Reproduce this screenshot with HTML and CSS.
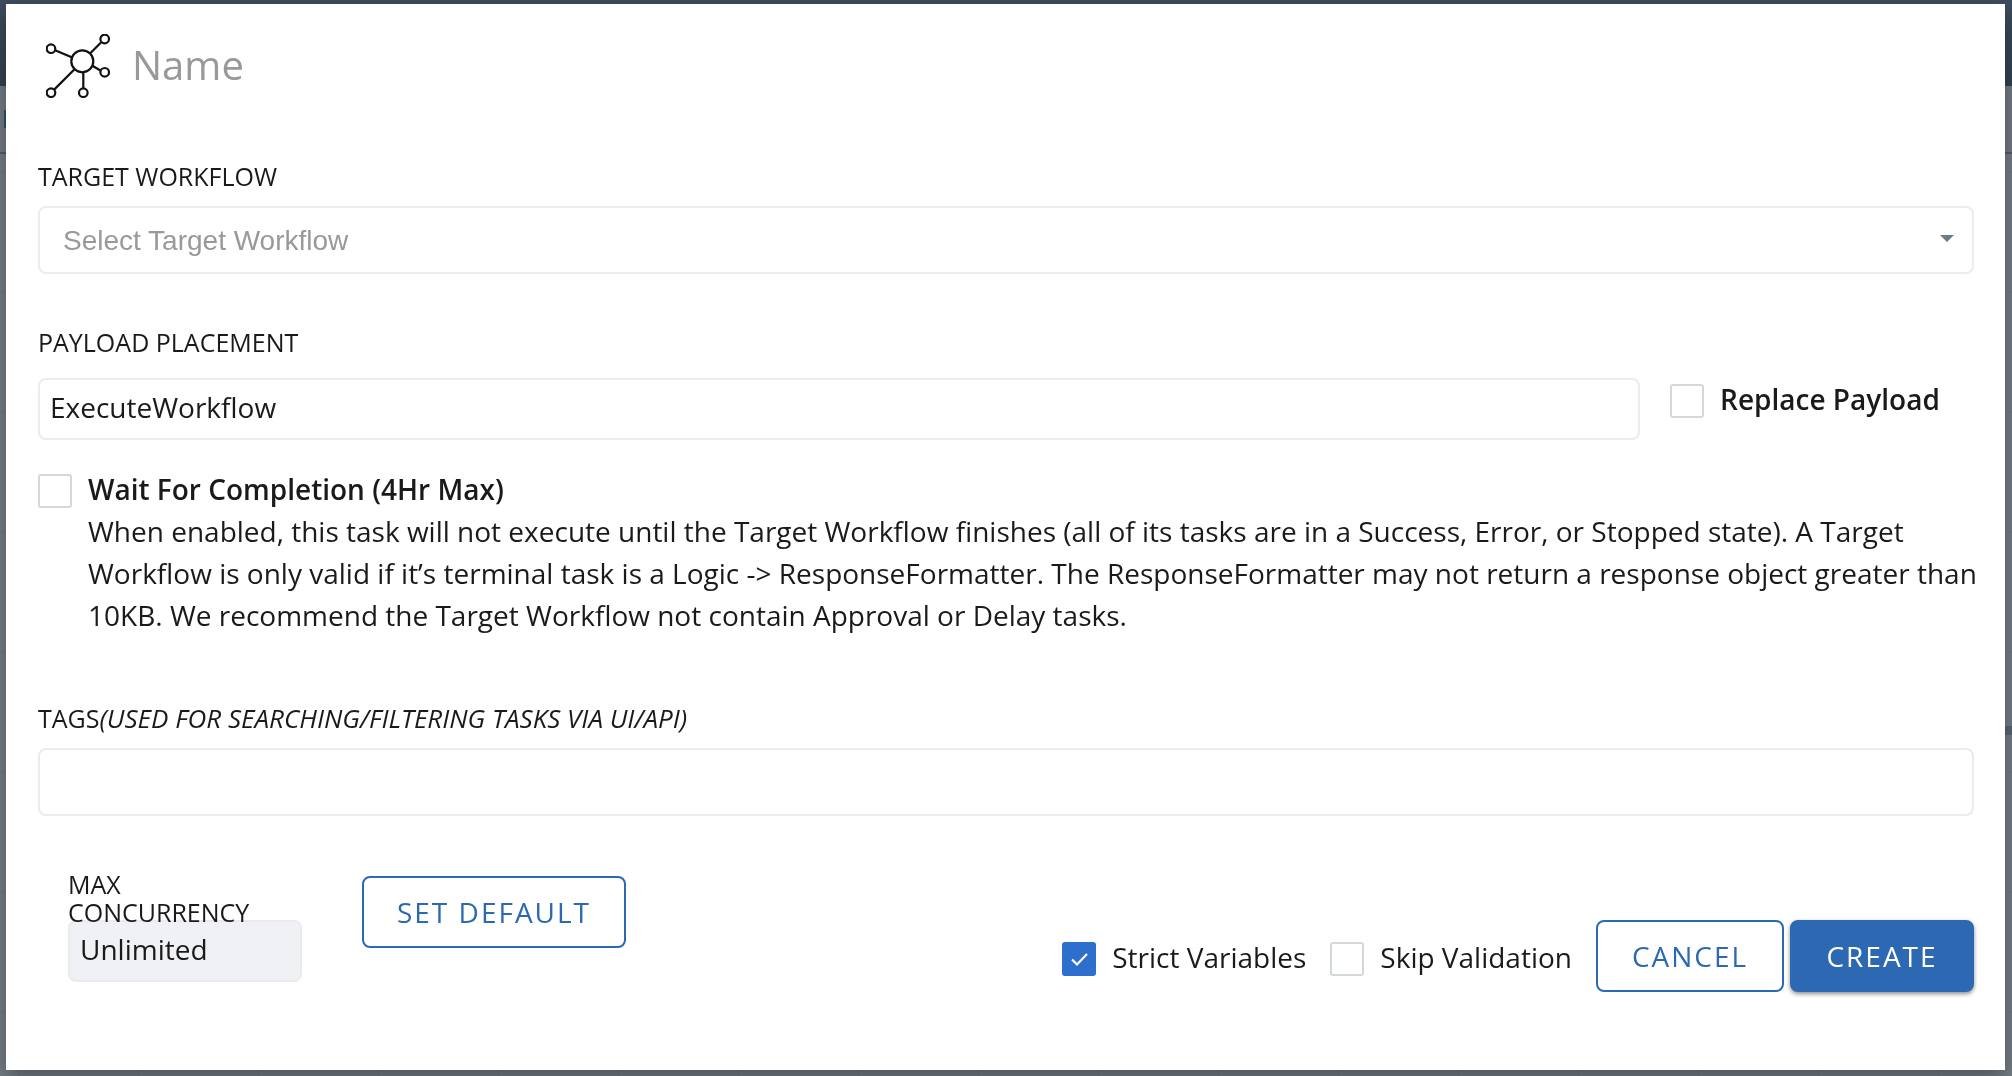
FILE: index.html
```
<!DOCTYPE html>
<html lang="en">
<head>
  <meta charset="utf-8">
  <title>Execute Workflow</title>
  <link rel="stylesheet" href="styles.css">
</head>
<body>
  <div class="backdrop" aria-hidden="true">
    <div class="topbar"></div>
    <div class="toolbar"><span class="toolbar-tab"></span></div>
    <div class="canvas"><span class="canvas-edge"></span></div>
  </div>
  <form class="dialog" role="dialog" aria-label="Execute Workflow">
    <header class="dialog-header">
      <svg class="task-icon" viewBox="0 0 64 64" fill="none" stroke="#111" stroke-width="2.200">
        <path d="M44 19.500 55.500 8M25.700 23.300 9.600 16.500M46.800 32 54.400 36.500M37.300 38.500V54M28.500 35.200 8.400 55.400"/>
        <circle cx="36.300" cy="27.300" r="11"/>
        <circle cx="58.700" cy="5" r="4.300"/>
        <circle cx="5" cy="14.700" r="4.300"/>
        <circle cx="58.700" cy="38.300" r="4.300"/>
        <circle cx="37.300" cy="58.700" r="4.300"/>
        <circle cx="5" cy="58.700" r="4.300"/>
      </svg>
      <input class="name-input" type="text" placeholder="Name" aria-label="Name">
    </header>

    <div class="field">
      <label class="field-label" for="targetWorkflow">TARGET WORKFLOW</label>
      <div class="select-wrap">
        <select id="targetWorkflow">
          <option value="" selected>Select Target Workflow</option>
        </select>
      </div>
    </div>

    <div class="field payload">
      <label class="field-label" for="payloadPlacement">PAYLOAD PLACEMENT</label>
      <div class="payload-row">
        <input class="text-input" type="text" id="payloadPlacement" value="ExecuteWorkflow">
        <label class="check strong"><input type="checkbox"><span>Replace Payload</span></label>
      </div>
    </div>

    <div class="wait">
      <input type="checkbox" id="waitForCompletion">
      <div class="wait-text">
        <label for="waitForCompletion">Wait For Completion (4Hr Max)</label>
        <p>When enabled, this task will not execute until the Target Workflow finishes (all of its tasks are in a Success, Error, or Stopped state). A Target Workflow is only valid if it’s terminal task is a Logic -&gt; ResponseFormatter. The ResponseFormatter may not return a response object greater than 10KB. We recommend the Target Workflow not contain Approval or Delay tasks.</p>
      </div>
    </div>

    <div class="field tags">
      <label class="field-label" for="tags">TAGS<em>(USED FOR SEARCHING/FILTERING TASKS VIA UI/API)</em></label>
      <input class="text-input tall" type="text" id="tags">
    </div>

    <footer class="dialog-footer">
      <div class="concurrency">
        <label for="maxConcurrency">MAX CONCURRENCY</label>
        <input class="text-input" type="text" id="maxConcurrency" value="Unlimited" disabled>
      </div>
      <button type="button" class="btn btn-default">SET DEFAULT</button>
      <div class="actions">
        <label class="check"><input type="checkbox" checked><span>Strict Variables</span></label>
        <label class="check"><input type="checkbox"><span>Skip Validation</span></label>
        <div class="buttons">
          <button type="button" class="btn">CANCEL</button>
          <button type="submit" class="btn btn-primary">CREATE</button>
        </div>
      </div>
    </footer>
  </form>
</body>
</html>
```
FILE: styles.css
```
* {
  box-sizing: border-box;
}
body {
  margin: 0;
  min-height: 100vh;
  display: flex;
  padding: 4px 7px 6px 6px;
  font-family: "Open Sans", "Noto Sans", sans-serif;
  font-size: 28px;
  color: #1a1a1a;
}
input, select, button {
  font: inherit;
  color: inherit;
}

/* dimmed editor behind the dialog */
.backdrop {
  position: fixed;
  inset: 0;
  display: flex;
  flex-direction: column;
}
.topbar {
  height: 86px;
  background: linear-gradient(#3e4c5e, #33424f);
}
.toolbar {
  height: 68px;
  padding: 24px 4px;
  background: #737b84;
  border-bottom: 2px solid #555d66;
}
.toolbar-tab {
  display: block;
  width: 90px;
  height: 18px;
  background: #2f5078;
}
.canvas {
  flex: 1;
  padding-top: 572px;
  background-color: #757e86;
  background-image:
    linear-gradient(#6f7880 1px, transparent 1px),
    linear-gradient(90deg, #6f7880 1px, transparent 1px);
  background-size: 120px 120px;
  background-position: 18px 18px;
}
.canvas-edge {
  display: block;
  width: 40px;
  height: 9px;
  margin-left: auto;
  background: #5c6670;
}

.dialog {
  position: relative;
  flex: 1;
  padding: 30px 31px 78px 32px;
  background: #fff;
  box-shadow: 0 8px 20px rgba(0, 0, 0, 0.35);
}
.dialog-header {
  display: flex;
  gap: 22px;
  padding-left: 8px;
  margin-bottom: 62px;
}
.task-icon {
  width: 64px;
  height: 64px;
}
.name-input {
  flex: 1;
  height: 60px;
  padding: 0;
  border: none;
  font-size: 40px;
}
.name-input::placeholder {
  color: #999;
  opacity: 1;
}

.field-label {
  display: block;
  margin-bottom: 14px;
  font-size: 25px;
  line-height: 32px;
}
.field-label em {
  font-size: 26px;
}
.text-input {
  display: block;
  width: 100%;
  height: 62px;
  padding: 0 10px 4px;
  border: 2px solid #ebebf0;
  border-radius: 8px;
  background: #fff;
}
.text-input.tall {
  height: 68px;
}
.text-input:disabled {
  background: #f0f1f4;
  border-color: #ebebee;
}
.select-wrap {
  position: relative;
}
.select-wrap::after {
  content: "";
  position: absolute;
  top: 29px;
  right: 20px;
  border: 7px solid transparent;
  border-top-color: #6e7b87;
  border-bottom: none;
  pointer-events: none;
}
select {
  display: block;
  appearance: none;
  width: 100%;
  height: 68px;
  padding: 0 48px 0 23px;
  border: 2px solid #ebebf0;
  border-radius: 8px;
  background: #fff;
  font-family: "Liberation Sans", Arial, sans-serif;
  color: #999;
}

.payload {
  margin-top: 52px;
}
.payload .field-label {
  margin-bottom: 20px;
}
.payload-row {
  display: flex;
  align-items: flex-start;
  gap: 30px;
}
.payload-row .text-input {
  flex: 1;
}
.payload-row .check {
  width: 304px;
  margin-top: 6px;
}

input[type="checkbox"] {
  appearance: none;
  flex: none;
  width: 34px;
  height: 34px;
  margin: 0;
  border: 2px solid #d3d9d9;
  border-radius: 3px;
  background: #fff;
}
input[type="checkbox"]:checked {
  border-color: #2d6fcc;
  background: #2d6fcc url("data:image/svg+xml,%3Csvg xmlns='http://www.w3.org/2000/svg' viewBox='0 0 30 30'%3E%3Cpath d='M8 15.500l5 5L23 10' fill='none' stroke='white' stroke-width='2.200'/%3E%3C/svg%3E") center / 30px 30px no-repeat;
}
.check {
  display: flex;
  gap: 16px;
  line-height: 30px;
  white-space: nowrap;
}
.strong {
  font-weight: 600;
}

.wait {
  display: flex;
  gap: 16px;
  margin: 28px -16px 66px 0;
}
.wait input {
  margin-top: 6px;
}
.wait-text {
  line-height: 42px;
}
.wait-text label {
  display: block;
  font-weight: 600;
}
.wait-text p {
  margin: 0;
}

.dialog-footer {
  display: flex;
  align-items: flex-start;
  margin-top: 54px;
  padding-left: 30px;
}
.concurrency {
  width: 234px;
  margin-right: 60px;
}
.concurrency label {
  position: relative;
  z-index: 1;
  display: block;
  margin-bottom: -6px;
  font-size: 25px;
  line-height: 28px;
}
.btn {
  height: 72px;
  padding: 0 31px;
  border: 2px solid #2d69b3;
  border-radius: 8px;
  background: #fff;
  color: #2d69b3;
  letter-spacing: 2px;
}
.btn-default {
  min-width: 264px;
  margin-top: 6px;
}
.btn-primary {
  background: #2d69b3;
  color: #fff;
  box-shadow: 0 2px 4px rgba(0, 0, 0, 0.45);
}
.actions {
  display: flex;
  align-items: center;
  gap: 24px;
  margin: 50px 0 0 auto;
}
.actions .check {
  padding-top: 6px;
}
.buttons {
  display: grid;
  grid-template-columns: 188px 184px;
  gap: 6px;
}
```
